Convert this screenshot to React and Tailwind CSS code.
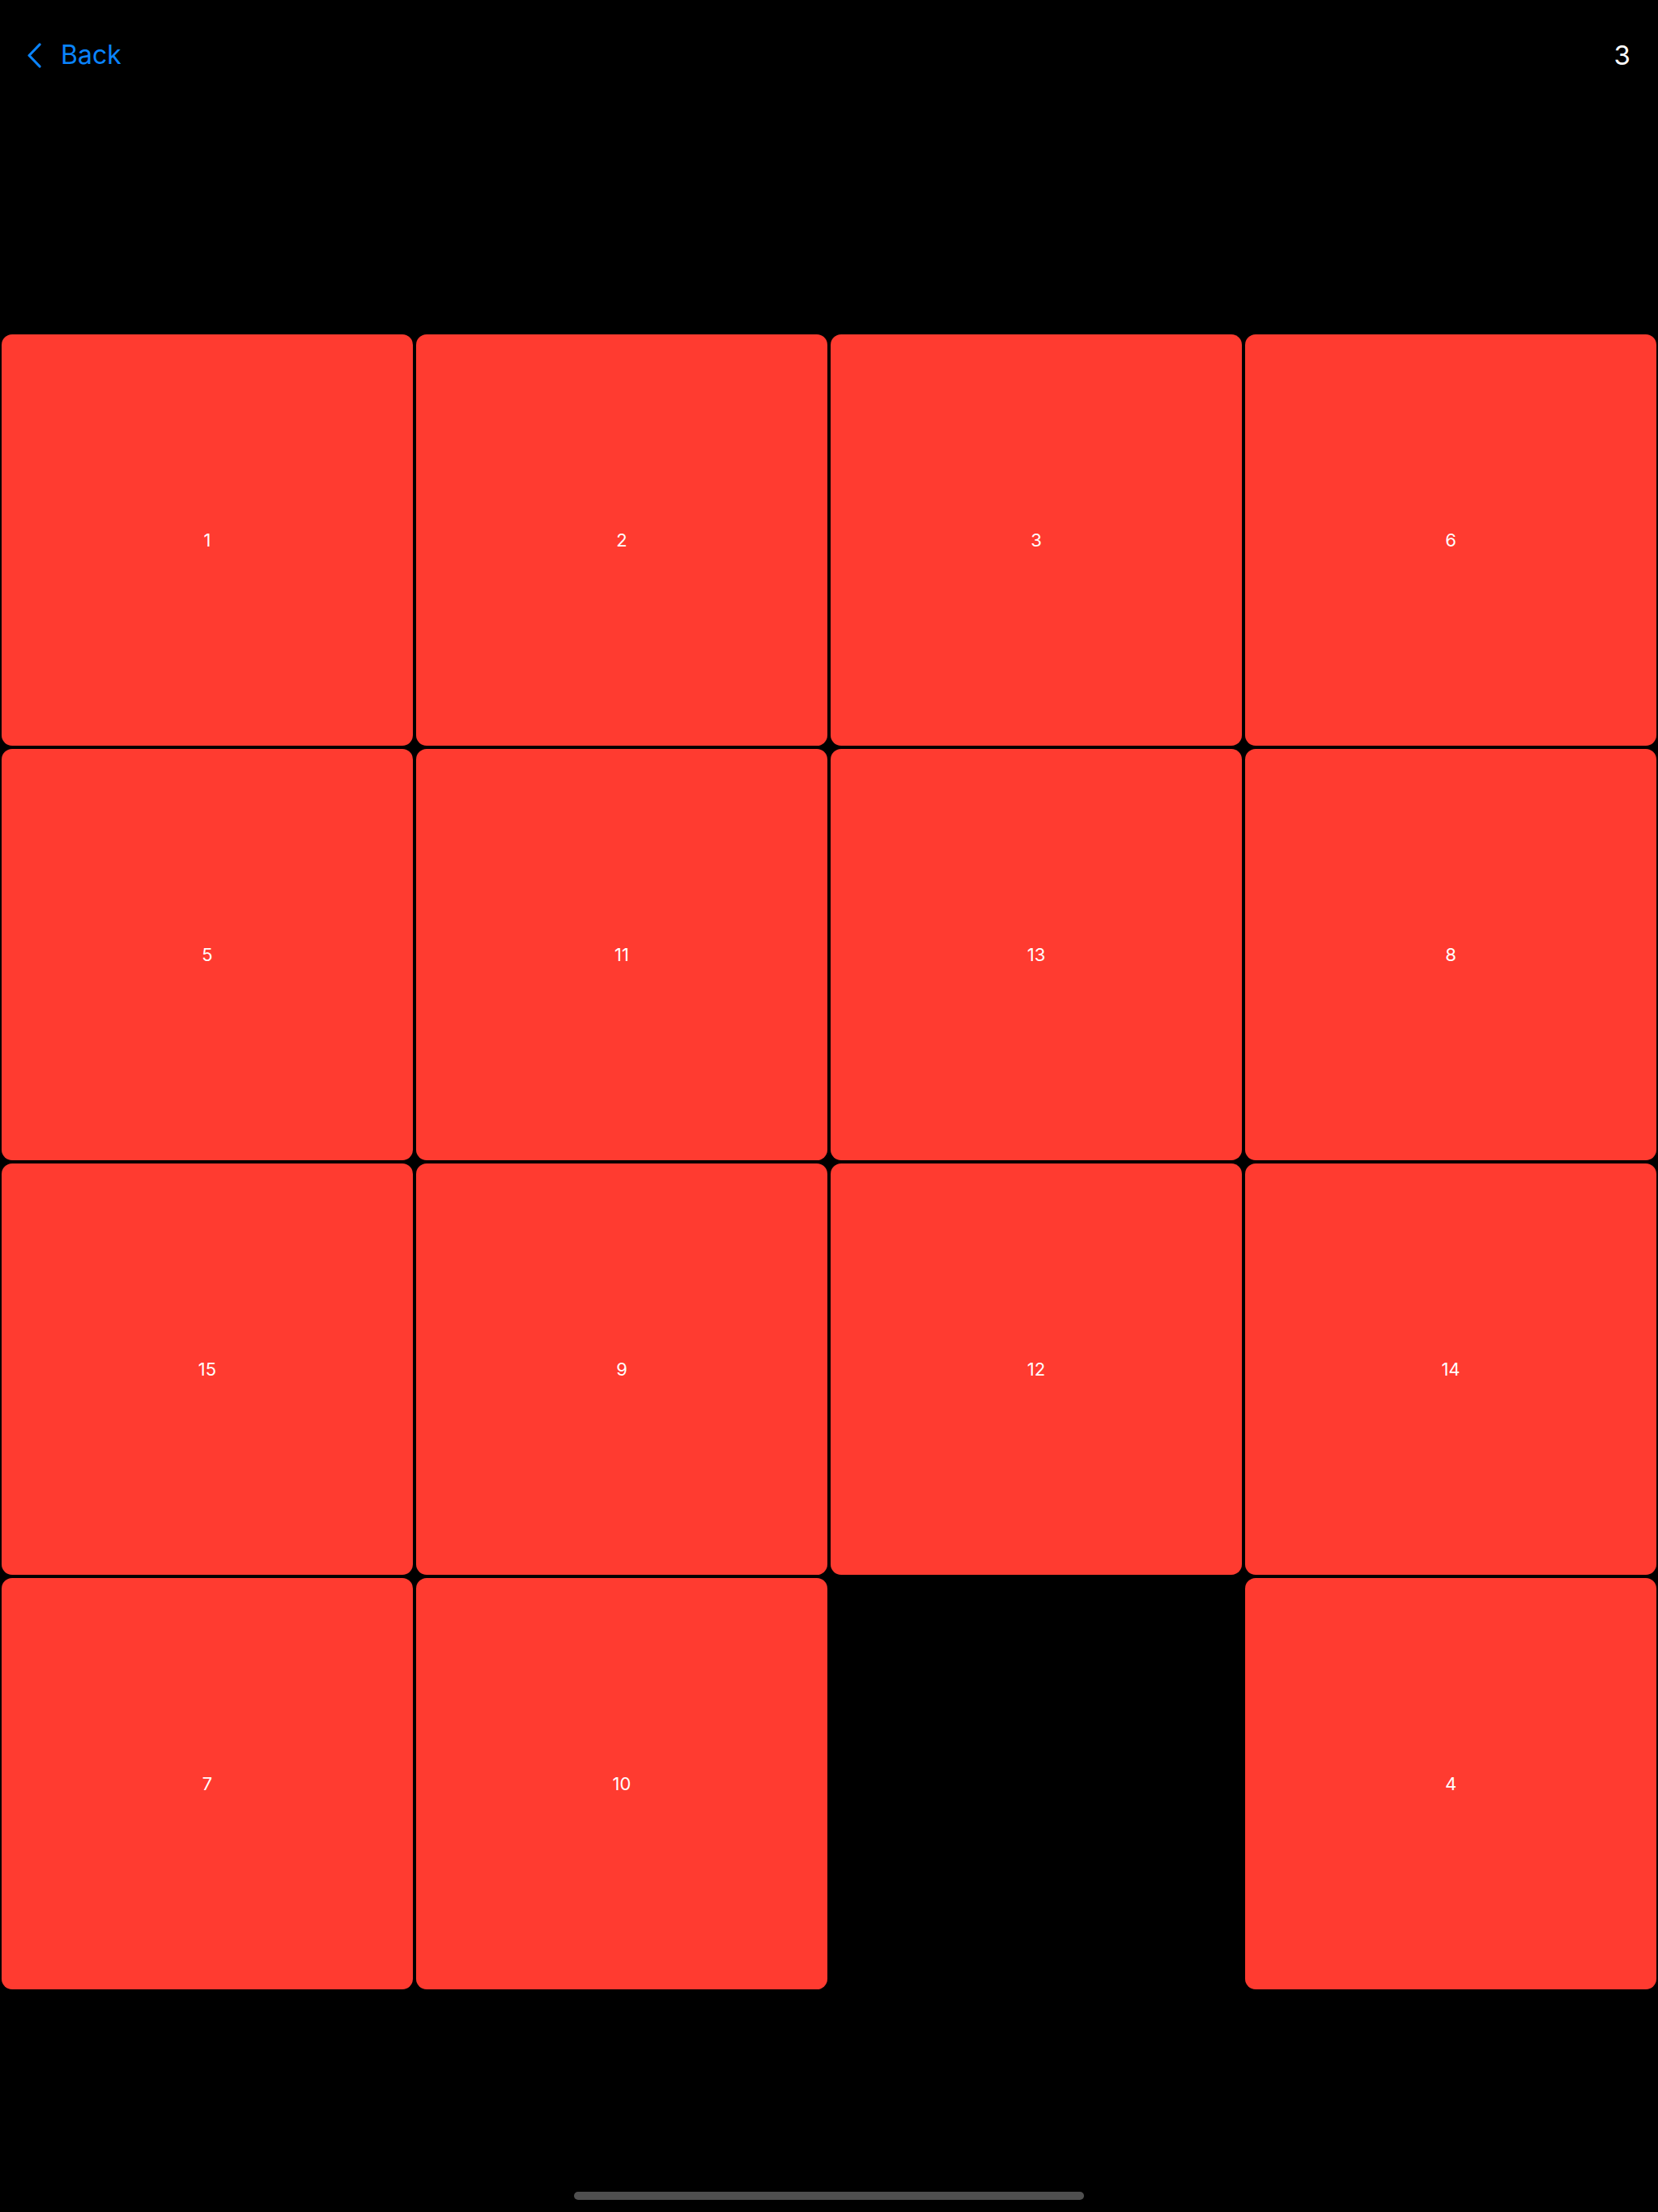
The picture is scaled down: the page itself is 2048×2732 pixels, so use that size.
import React from "react";

const tiles = [1, 2, 3, 6, 5, 11, 13, 8, 15, 9, 12, 14, 7, 10, null, 4];

export default function App() {
  return (
    <div
      className="flex h-[2732px] w-[2048px] flex-col bg-black text-white"
      style={{ fontFamily: "Inter, 'Liberation Sans', sans-serif" }}
    >
      <div className="flex h-[136px] items-center justify-between pl-[33px] pr-[34px]">
        <button className="flex items-center gap-[23px] text-[#0a84ff]">
          <svg width="19" height="31" viewBox="0 0 19 31" fill="none">
            <path
              d="M16 2 L3 15.5 L16 29"
              stroke="#0a84ff"
              strokeWidth="3.2"
              strokeLinecap="round"
              strokeLinejoin="round"
            />
          </svg>
          <span className="text-[32px] leading-none">Back</span>
        </button>
        <span className="text-[33px] leading-none">3</span>
      </div>

      <div className="mt-[277px] grid grid-cols-4 gap-[4px] px-[2px]">
        {tiles.map((n, i) =>
          n === null ? (
            <div key={i} className="aspect-square" />
          ) : (
            <div
              key={i}
              className="flex aspect-square items-center justify-center rounded-[13px] bg-[#ff3b30] text-[22px]"
            >
              {n}
            </div>
          )
        )}
      </div>

      <div className="mt-auto flex justify-center pb-[15px]">
        <div className="h-[10px] w-[630px] rounded-full bg-[#4f4f4f]" />
      </div>
    </div>
  );
}
